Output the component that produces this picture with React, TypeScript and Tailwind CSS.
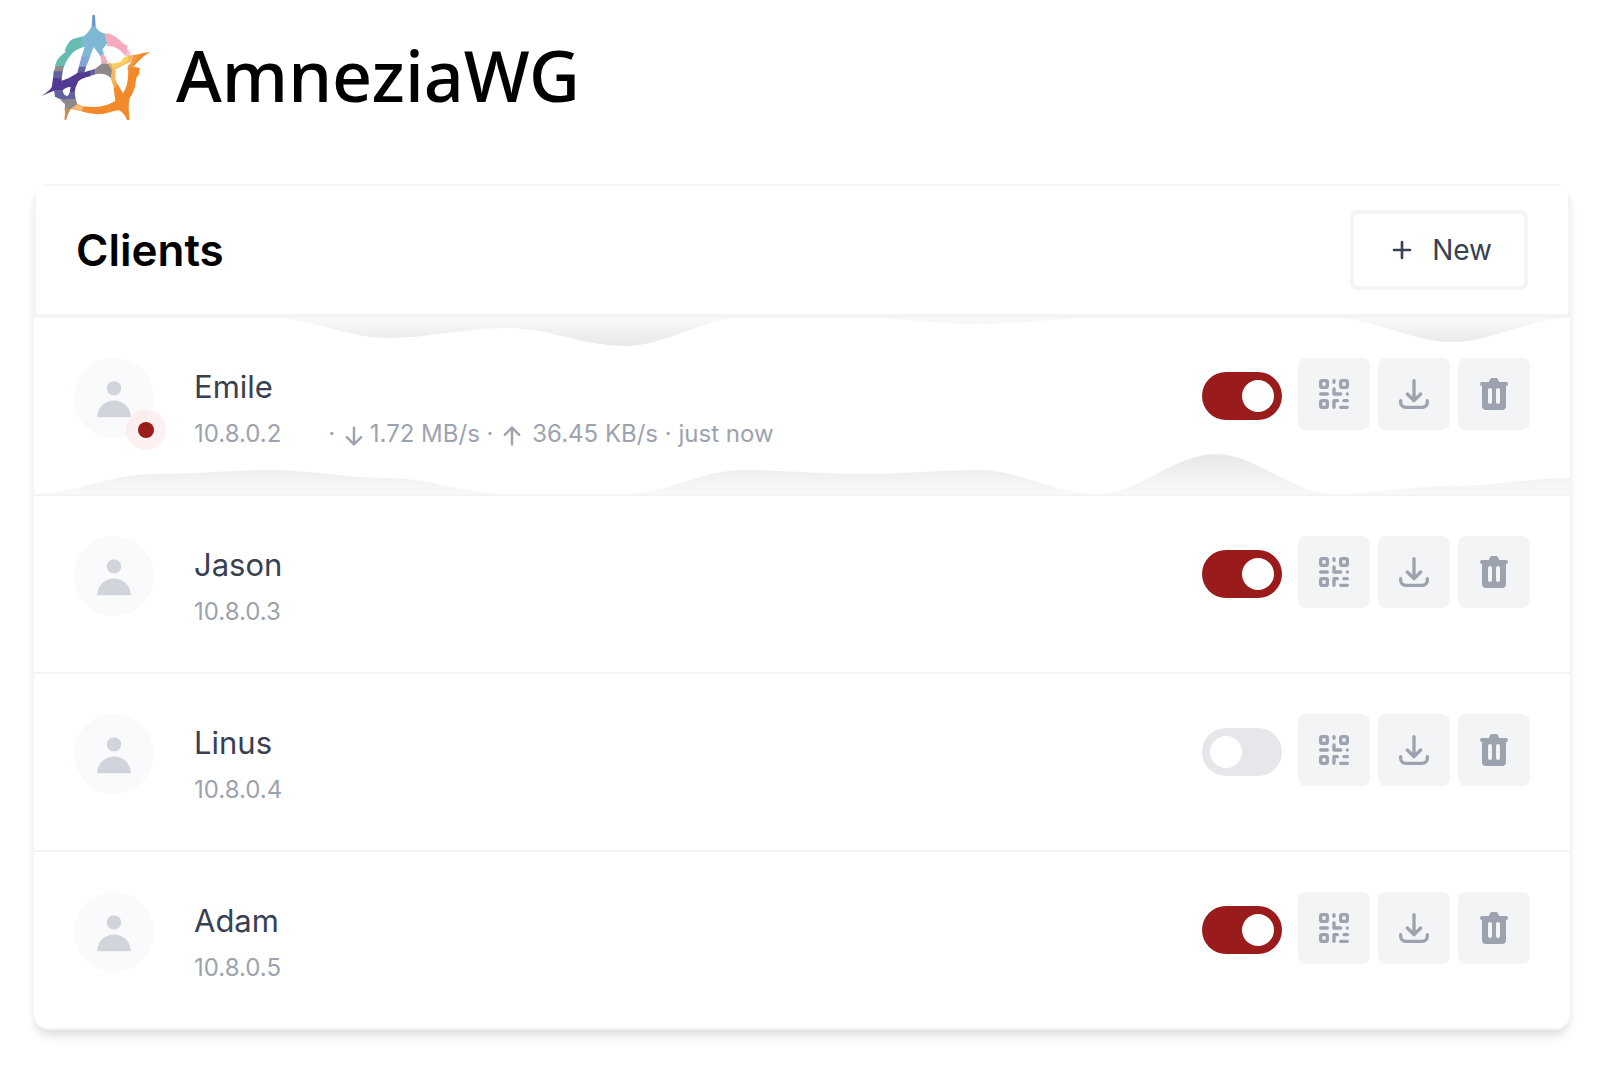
import React from "react";

type Client = {
  name: string;
  address: string;
  enabled: boolean;
  traffic?: { rx: string; tx: string; seen: string };
};

const clients: Client[] = [
  {
    name: "Emile",
    address: "10.8.0.2",
    enabled: true,
    traffic: { rx: "1.72 MB/s", tx: "36.45 KB/s", seen: "just now" },
  },
  { name: "Jason", address: "10.8.0.3", enabled: true },
  { name: "Linus", address: "10.8.0.4", enabled: false },
  { name: "Adam", address: "10.8.0.5", enabled: true },
];

const downloadHistory = [0, 0, 0, 20, 10, 28, 0, 0, 6, 0, 0, 0, 24, 0];
const uploadHistory = [0, 20, 24, 16, 0, 0, 24, 20, 24, 0, 40, 0, 8, 16];

/** Smooth area path through evenly spaced samples, level at every sample. */
function areaPath(values: number[], toY: (v: number) => number) {
  const step = 100;
  const reach = 35;
  let d = `M0,${toY(0)} L0,${toY(values[0])}`;
  for (let i = 1; i < values.length; i++) {
    const x = i * step;
    d += ` C${x - step + reach},${toY(values[i - 1])} ${x - reach},${toY(values[i])} ${x},${toY(values[i])}`;
  }
  return `${d} L${(values.length - 1) * step},${toY(0)} Z`;
}

function TrafficChart({ values, flipped }: { values: number[]; flipped?: boolean }) {
  const id = flipped ? "rx-fill" : "tx-fill";
  return (
    <svg
      aria-hidden="true"
      viewBox="0 0 1300 40"
      preserveAspectRatio="none"
      className={
        flipped
          ? "pointer-events-none absolute inset-x-0 top-0 h-10 w-full"
          : "pointer-events-none absolute inset-x-0 bottom-0 h-10 w-full"
      }
    >
      <defs>
        <linearGradient id={id} x1="0" x2="0" y1={flipped ? "1" : "0"} y2={flipped ? "0" : "1"}>
          <stop offset="0" stopColor="#e8e8e8" />
          <stop offset="1" stopColor="#f9f9f9" />
        </linearGradient>
      </defs>
      <path fill={`url(#${id})`} d={areaPath(values, (v) => (flipped ? v : 40 - v))} />
    </svg>
  );
}

function Logo() {
  return (
    <svg viewBox="0 0 390 390" className="size-[130px] shrink-0" role="img" aria-label="AmneziaWG logo">
      <path fill="#66bcb1" d="M75 201C78 182 86 170 107 156L104 152Q114 124 129 117L159 109 163 141C138 145 114 166 102 201Z" />
      <path fill="#6b97cf" d="M187 46Q191 42 195 47L197 80 185 82Z" />
      <path fill="#7fb8d3" d="M185 80L196 79Q202 92 212 96L225 101 232 130 217 148 222 162 213 171 191 141 179 173 155 169 164 141 152 139 158 111Q178 95 185 80Z" />
      <path fill="#84a6d4" d="M155 168L180 172 168 201 147 199Z" />
      <path fill="#6261a0" d="M147 199L168 200 163 219 141 222Z" />
      <path fill="#8e878c" d="M76 200L102 197 98 215 71 217Z" />
      <path fill="#6261a0" d="M71 214L98 214 95 236 69 236Z" />
      <path fill="#523a92" d="M69 234L95 235 95 242Q120 235 142 219L163 217 181 211 181 229Q158 233 145 244L137 262 134 277 119 277 122 261Q108 260 97 272L72 272 34 288Q65 269 66 258Z" />
      <path fill="#6261a0" d="M72 271L98 269C99 283 107 289 114 287L120 276 134 274 137 298 104 301 91 298 75 290Z" />
      <path fill="#8e878c" d="M91 300L105 298 137 297 142 312 132 326 104 328 105 312Z" />
      <path fill="#cb8f4a" d="M104 327L124 325Q112 342 109 359L103 359Q107 342 104 327Z" />
      <path fill="#f3ab55" d="M142 311L162 320 154 334 122 326Z" />
      <path fill="#f6bd7c" d="M139 315L162 321 152 333 133 325Z" />
      <path fill="#6261a0" d="M179 212L195 206 197 223 180 228Z" />
      <path fill="#f5abbd" d="M211 170L220 160 234 187 231 192 214 190Z" />
      <path fill="#8e878c" d="M195 207L217 190 236 192 247 207 244 236Q228 217 196 223Z" />
      <path fill="#f5abbd" d="M224 101Q237 97 250 107Q263 112 279 130L294 139 290 147 297 152 286 167C268 146 251 136 230 138L232 130Z" />
      <path fill="#f9c8da" d="M286 167L294 149 304 159 297 170Z" />
      <path fill="#f3b04e" d="M233 188L249 191 251 207 245 209Z" />
      <path fill="#fccf62" d="M245 191L270 186Q279 172 292 167L296 185 274 195 248 207Z" />
      <path fill="#f8b85b" d="M292 167L309 165 303 187 296 188 274 199 248 212 247 206 274 194 295 184Z" />
      <path fill="#ef9a45" d="M309 165L330 162 328 170 300 215 292 208 294 197 303 188Z" />
      <path fill="#f28a2a" d="M326 163Q344 156 361 157 345 164 326 183L304 207Z" />
      <path fill="#f8b85b" d="M246 207L257 209 256 238 243 239Z" />
      <path fill="#f6b04e" d="M243 237L256 237 262 252 252 266Z" />
      <path fill="#f28a2a" d="M313 200L330 205Q326 216 328 223C314 232 319 252 314 263Q307 285 300 292C292 320 299 340 298 360L291 360Q284 340 267 331 249 332 240 337 197 350 154 334L162 319C195 324 230 320 256 302L251 266 262 251 279 280C295 255 294 232 295 207Z" />
    </svg>
  );
}

function Icon({ d, className, solid }: { d: string; className: string; solid?: boolean }) {
  return solid ? (
    <svg viewBox="0 0 20 20" fill="currentColor" className={className} aria-hidden="true">
      <path fillRule="evenodd" clipRule="evenodd" d={d} />
    </svg>
  ) : (
    <svg
      viewBox="0 0 24 24"
      fill="none"
      stroke="currentColor"
      strokeWidth="2"
      strokeLinecap="round"
      strokeLinejoin="round"
      className={className}
      aria-hidden="true"
    >
      <path d={d} />
    </svg>
  );
}

const icons = {
  plus: "M12 6v6m0 0v6m0-6h6m-6 0H6",
  qr: "M12 4v1m6 11h2m-6 0h-2v4m0-11v3m0 0h.01M12 12h4.01M16 20h4M4 12h4m12 0h.01M5 8h2a1 1 0 001-1V5a1 1 0 00-1-1H5a1 1 0 00-1 1v2a1 1 0 001 1zm12 0h2a1 1 0 001-1V5a1 1 0 00-1-1h-2a1 1 0 00-1 1v2a1 1 0 001 1zM5 20h2a1 1 0 001-1v-2a1 1 0 00-1-1H5a1 1 0 00-1 1v2a1 1 0 001 1z",
  download: "M4 16v1a3 3 0 003 3h10a3 3 0 003-3v-1m-4-4l-4 4m0 0l-4-4m4 4V4",
  trash:
    "M9 2a1 1 0 00-.894.553L7.382 4H4a1 1 0 000 2v10a2 2 0 002 2h8a2 2 0 002-2V6a1 1 0 100-2h-3.382l-.724-1.447A1 1 0 0011 2H9zM7 8a1 1 0 012 0v6a1 1 0 11-2 0V8zm5-1a1 1 0 00-1 1v6a1 1 0 102 0V8a1 1 0 00-1-1z",
  user: "M10 9a3 3 0 100-6 3 3 0 000 6zm-7 9a7 7 0 1114 0H3z",
  down: "M16.707 10.293a1 1 0 010 1.414l-6 6a1 1 0 01-1.414 0l-6-6a1 1 0 111.414-1.414L9 14.586V3a1 1 0 012 0v11.586l4.293-4.293a1 1 0 011.414 0z",
  up: "M3.293 9.707a1 1 0 010-1.414l6-6a1 1 0 011.414 0l6 6a1 1 0 01-1.414 1.414L11 5.414V17a1 1 0 11-2 0V5.414L4.707 9.707a1 1 0 01-1.414 0z",
};

function ActionButton({ label, d, solid }: { label: string; d: string; solid?: boolean }) {
  return (
    <button
      type="button"
      aria-label={label}
      className="rounded-lg bg-[#f3f4f6] p-4 text-[#9ca3af] hover:bg-red-800 hover:text-white"
    >
      <Icon d={d} solid={solid} className="size-10" />
    </button>
  );
}

function ClientRow({ client }: { client: Client }) {
  const { name, address, enabled, traffic } = client;
  return (
    <li className="relative border-b-2 border-[#f3f4f6]">
      {traffic && (
        <>
          <TrafficChart values={downloadHistory} flipped />
          <TrafficChart values={uploadHistory} />
        </>
      )}
      <div className="relative flex h-44 items-start p-10">
        <div className="relative mr-10 size-20 shrink-0 rounded-full bg-[#f9fafb] p-4 text-[#d1d5db]">
          <Icon d={icons.user} solid className="size-12" />
          {traffic && (
            <span className="absolute -right-3 -bottom-3 flex size-10 items-center justify-center rounded-full bg-[#fee2e2]/50">
              <span className="size-4 rounded-full bg-[#991b1b]" />
            </span>
          )}
        </div>
        <div className="grow">
          <div className="pt-1 text-[31px] leading-[50px] text-[#374151]">{name}</div>
          <div className="flex items-center text-[24px] leading-[44px] whitespace-pre text-[#9ca3af]">
            <span>{address}</span>
            {traffic && (
              <>
                <span className="ml-10"> · </span>
                <Icon d={icons.down} solid className="mt-1 mr-1 size-6" />
                <span>{traffic.rx} · </span>
                <Icon d={icons.up} solid className="mt-1 mr-2 size-6" />
                <span>{traffic.tx} · {traffic.seen}</span>
              </>
            )}
          </div>
        </div>
        <div className="flex items-start gap-2">
          <input
            type="checkbox"
            role="switch"
            aria-label={`Enable ${name}`}
            defaultChecked={enabled}
            className="mt-[14px] mr-2 h-12 w-20 shrink-0 cursor-pointer appearance-none rounded-full bg-[#e5e7eb] p-2 before:block before:size-8 before:rounded-full before:bg-white before:content-[''] checked:bg-[#991b1b] checked:before:ml-8"
          />
          <ActionButton label={`Show QR code for ${name}`} d={icons.qr} />
          <ActionButton label={`Download configuration of ${name}`} d={icons.download} />
          <ActionButton label={`Delete ${name}`} d={icons.trash} solid />
        </div>
      </div>
    </li>
  );
}

export default function App() {
  return (
    <div className="min-h-screen bg-white px-[34px] pb-9 font-['Inter',sans-serif]">
      <header className="-ml-1 flex h-46 items-start">
        <Logo />
        <h1 className="ml-4 pt-6 font-['Noto_Sans',sans-serif] text-[70px] leading-[102px] font-medium text-black">
          AmneziaWG
        </h1>
      </header>
      <main className="overflow-hidden rounded-2xl bg-white shadow-[0_8px_12px_-2px_rgba(0,0,0,0.1),0_4px_8px_-2px_rgba(0,0,0,0.06)]">
        <div className="flex items-center justify-between border-2 border-b-4 border-[#f3f4f6] px-10 py-6">
          <h2 className="text-[44px] leading-[60px] font-semibold text-black">Clients</h2>
          <button
            type="button"
            className="flex h-20 items-center rounded-lg border-4 border-[#f3f4f6] px-8 text-[28px] text-[#374151]"
          >
            <Icon d={icons.plus} className="mr-3.5 size-8" />
            New
          </button>
        </div>
        <ul>
          {clients.map((c) => (
            <ClientRow key={c.address} client={c} />
          ))}
        </ul>
      </main>
    </div>
  );
}
